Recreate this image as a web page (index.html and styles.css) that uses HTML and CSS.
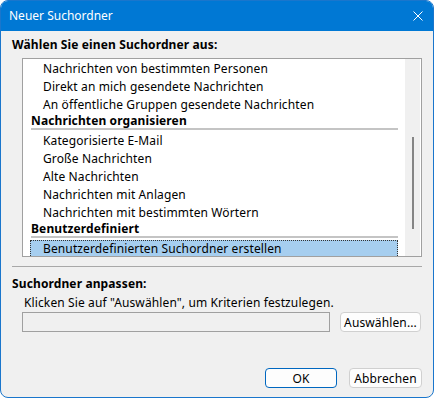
FILE: index.html
```html
<!DOCTYPE html>
<html lang="de">
<head>
  <meta charset="UTF-8">
  <title>Neuer Suchordner</title>
  <link rel="stylesheet" href="styles.css">
</head>
<body>
  <div class="window">
    <div class="titlebar">
      <span class="title">Neuer Suchordner</span>
      <svg class="close" width="10" height="10" viewBox="0 0 10 10">
        <path d="M0.5 0.5 L9.5 9.5 M9.5 0.5 L0.5 9.5" stroke="#fff" stroke-width="1"/>
      </svg>
    </div>

    <div class="heading">Wählen Sie einen Suchordner aus:</div>

    <div class="listbox">
      <div class="list">
        <div class="item">Nachrichten von bestimmten Personen</div>
        <div class="item">Direkt an mich gesendete Nachrichten</div>
        <div class="item">An öffentliche Gruppen gesendete Nachrichten</div>
        <div class="group">Nachrichten organisieren</div>
        <div class="item">Kategorisierte E-Mail</div>
        <div class="item">Große Nachrichten</div>
        <div class="item">Alte Nachrichten</div>
        <div class="item">Nachrichten mit Anlagen</div>
        <div class="item">Nachrichten mit bestimmten Wörtern</div>
        <div class="group">Benutzerdefiniert</div>
        <div class="item selected">Benutzerdefinierten Suchordner erstellen</div>
      </div>
      <div class="scrollbar">
        <div class="thumb"></div>
      </div>
    </div>

    <div class="separator"></div>

    <div class="subheading">Suchordner anpassen:</div>
    <div class="hint">Klicken Sie auf "Auswählen", um Kriterien festzulegen.</div>
    <div class="criteria">
      <div class="criteria-box"></div>
      <button class="btn">Auswählen...</button>
    </div>

    <div class="footer">
      <button class="btn btn-default">OK</button>
      <button class="btn">Abbrechen</button>
    </div>
  </div>
</body>
</html>
```

FILE: styles.css
```css
* {
  box-sizing: border-box;
}
body {
  margin: 0;
  background: #fff;
  font-family: "Noto Sans", "DejaVu Sans", sans-serif;
  font-size: 12px;
  letter-spacing: 0.12px;
  color: #000;
}
.window {
  width: 434px;
  height: 398px;
  border: 1px solid #1a76cc;
  border-radius: 8px;
  overflow: hidden;
  background: #f0f0f0;
  display: flex;
  flex-direction: column;
}
.titlebar {
  height: 30px;
  background: #0078d4;
  color: #fff;
  display: flex;
  align-items: center;
  justify-content: space-between;
  padding: 0 10px 1px 8px;
  flex-shrink: 0;
}
.title {
  line-height: 16px;
  letter-spacing: 0;
}
.close {
  display: block;
}
.heading,
.subheading {
  font-weight: bold;
  line-height: 16px;
  margin-left: 11px;
}
.heading {
  margin-top: 6px;
}
.listbox {
  margin: 5px 0 0 21px;
  width: 400px;
  height: 199px;
  border: 1px solid #a0a0a0;
  background: #fff;
  display: flex;
  flex-shrink: 0;
}
.list {
  flex: 1;
  overflow: hidden;
  padding: 1px 7px 0;
}
.item {
  height: 18px;
  line-height: 18px;
  padding-left: 13px;
  white-space: nowrap;
}
.group {
  height: 18px;
  line-height: 14px;
  padding-left: 1px;
  font-weight: bold;
  white-space: nowrap;
}
.group::after {
  content: "";
  display: block;
  height: 2px;
  background: #c4c4c4;
}
.selected {
  background: #a6ceef;
  outline: 1px dotted #333;
  outline-offset: -1px;
}
.scrollbar {
  width: 16px;
  background: #f0f0f0;
  border-right: 1px solid #fff;
  padding: 78px 0 0 7px;
}
.thumb {
  width: 2px;
  height: 92px;
  background: #858585;
}
.separator {
  margin: 9px 0 0 11px;
  width: 410px;
  height: 1px;
  background: #a8a8a8;
  flex-shrink: 0;
}
.subheading {
  margin-top: 9px;
}
.hint {
  margin: 3px 0 0 23px;
  line-height: 16px;
}
.criteria {
  display: flex;
  gap: 10px;
  margin: 1px 0 0 21px;
}
.criteria-box {
  width: 308px;
  height: 20px;
  border: 1px solid #a0a0a0;
  background: #f0f0f0;
}
.btn {
  font-family: inherit;
  font-size: 12px;
  letter-spacing: 0.12px;
  color: #000;
  height: 20px;
  padding: 0;
  width: 81px;
  border: 1px solid #d0d0d0;
  border-radius: 4px;
  background: #fdfdfd;
}
.footer {
  display: flex;
  justify-content: flex-end;
  gap: 12px;
  margin-top: 36px;
  padding-right: 11px;
}
.footer .btn {
  width: 72px;
}
.footer .btn + .btn {
  width: 73px;
}
.btn-default {
  border-color: #0067c0;
}
```
